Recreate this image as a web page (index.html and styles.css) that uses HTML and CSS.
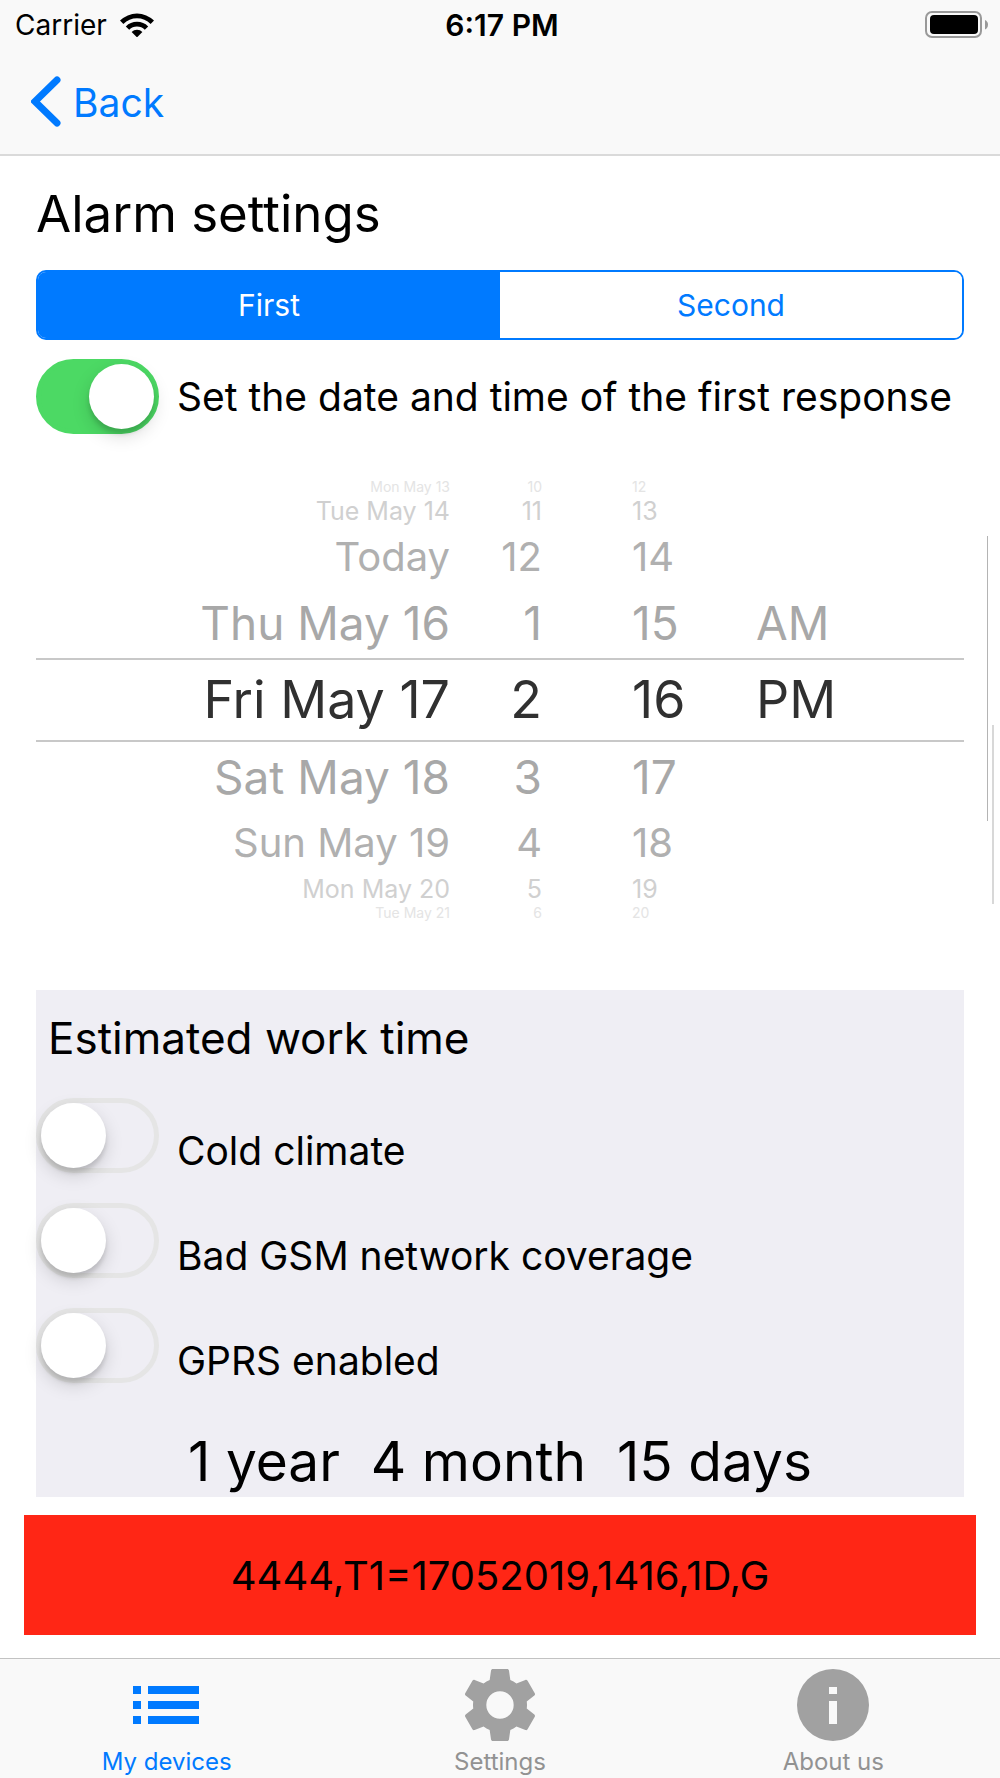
FILE: index.html
```html
<!DOCTYPE html>
<html lang="en">
<head>
<meta charset="utf-8">
<meta name="viewport" content="width=device-width, initial-scale=1">
<title>Alarm settings</title>
<link rel="stylesheet" href="styles.css">
</head>
<body>
<div class="app">
  <header class="top">
    <div class="status">
      <div class="carrier">
        <span>Carrier</span>
        <svg class="wifi" viewBox="0 0 34 24" aria-hidden="true">
          <path d="M0 7.6 A24 24 0 0 1 34 7.6 L30.6 11 A19.2 19.2 0 0 0 3.4 11 Z"/>
          <path d="M5.8 13.4 A15.8 15.8 0 0 1 28.2 13.4 L24.8 16.8 A11 11 0 0 0 9.2 16.8 Z"/>
          <path d="M11.6 19 A7.6 7.6 0 0 1 22.4 19 L17 24.4 Z"/>
        </svg>
      </div>
      <time class="clock">6:17 PM</time>
      <svg class="battery" viewBox="0 0 64 28" aria-hidden="true">
        <rect x="1" y="1" width="55" height="25" rx="6" fill="none" stroke="#999" stroke-width="2"/>
        <rect x="5" y="4" width="48" height="19" rx="4" fill="#000"/>
        <path d="M60 9 Q63 10.500 63 13.500 Q63 17 60 18.500 Z" fill="#999"/>
      </svg>
    </div>
    <nav class="navbar">
      <a class="back" href="#">
        <svg class="chevron" viewBox="0 0 30 52" aria-hidden="true"><path d="M26 4 L4 25.500 L26 47"/></svg>
        <span>Back</span>
      </a>
    </nav>
  </header>

  <main class="content">
    <h1 class="title">Alarm settings</h1>
    <div class="segments">
      <button class="segment segment-on" type="button" aria-pressed="true">First</button>
      <button class="segment" type="button" aria-pressed="false">Second</button>
    </div>
    <div class="switch-row">
      <input class="switch" type="checkbox" role="switch" id="set-date" checked>
      <label for="set-date">Set the date and time of the first response</label>
    </div>

    <div class="picker">
      <ul class="wheel" role="listbox" aria-label="Date">
        <li class="row far" role="option">Mon May 13</li>
        <li class="row third" role="option">Tue May 14</li>
        <li class="row second" role="option">Today</li>
        <li class="row first" role="option">Thu May 16</li>
        <li class="row current" role="option" aria-selected="true">Fri May 17</li>
        <li class="row first" role="option">Sat May 18</li>
        <li class="row second" role="option">Sun May 19</li>
        <li class="row third" role="option">Mon May 20</li>
        <li class="row far" role="option">Tue May 21</li>
      </ul>
      <ul class="wheel" role="listbox" aria-label="Hour">
        <li class="row far" role="option">10</li>
        <li class="row third" role="option">11</li>
        <li class="row second" role="option">12</li>
        <li class="row first" role="option">1</li>
        <li class="row current" role="option" aria-selected="true">2</li>
        <li class="row first" role="option">3</li>
        <li class="row second" role="option">4</li>
        <li class="row third" role="option">5</li>
        <li class="row far" role="option">6</li>
      </ul>
      <ul class="wheel wheel-minute" role="listbox" aria-label="Minute">
        <li class="row far" role="option">12</li>
        <li class="row third" role="option">13</li>
        <li class="row second" role="option">14</li>
        <li class="row first" role="option">15</li>
        <li class="row current" role="option" aria-selected="true">16</li>
        <li class="row first" role="option">17</li>
        <li class="row second" role="option">18</li>
        <li class="row third" role="option">19</li>
        <li class="row far" role="option">20</li>
      </ul>
      <ul class="wheel wheel-period" role="listbox" aria-label="AM or PM">
        <li class="row first" role="option">AM</li>
        <li class="row current" role="option" aria-selected="true">PM</li>
      </ul>
      <span class="scrollbar scrollbar-inner"></span>
      <span class="scrollbar scrollbar-outer"></span>
    </div>

    <section class="panel">
      <h2 class="panel-title">Estimated work time</h2>
      <div class="options">
        <div class="switch-row">
          <input class="switch" type="checkbox" role="switch" id="cold">
          <label for="cold">Cold climate</label>
        </div>
        <div class="switch-row">
          <input class="switch" type="checkbox" role="switch" id="gsm">
          <label for="gsm">Bad GSM network coverage</label>
        </div>
        <div class="switch-row">
          <input class="switch" type="checkbox" role="switch" id="gprs">
          <label for="gprs">GPRS enabled</label>
        </div>
      </div>
      <p class="estimate">1 year  4 month  15 days</p>
    </section>

    <button class="command" type="button">4444,T1=17052019,1416,1D,G</button>
  </main>

  <nav class="tabs">
    <a class="tab tab-on" href="#">
      <svg class="tab-icon" viewBox="0 0 72 72" aria-hidden="true">
        <path d="M2 17h8v8H2zM17 17h51v8H17zM2 32h8v8H2zM17 32h51v8H17zM2 47h8v8H2zM17 47h51v8H17z"/>
      </svg>
      <span>My devices</span>
    </a>
    <a class="tab" href="#">
      <svg class="tab-icon" viewBox="2 2 20 20" aria-hidden="true">
        <path d="M19.430 12.980c.04-.32.07-.64.07-.98s-.03-.66-.07-.98l2.110-1.650c.19-.15.24-.42.12-.64l-2-3.460c-.12-.22-.39-.3-.61-.22l-2.490 1c-.52-.4-1.080-.73-1.690-.98l-.38-2.650C14.460 2.180 14.250 2 14 2h-4c-.25 0-.46.18-.49.42l-.38 2.650c-.61.25-1.170.59-1.690.98l-2.490-1c-.23-.09-.49 0-.61.22l-2 3.460c-.13.22-.07.49.12.64l2.110 1.650c-.04.32-.07.65-.07.98s.03.66.07.98l-2.110 1.650c-.19.15-.24.42-.12.64l2 3.460c.12.22.39.3.61.22l2.490-1c.52.4 1.080.73 1.690.98l.38 2.650c.03.24.24.42.49.42h4c.25 0 .46-.18.49-.42l.38-2.650c.61-.25 1.170-.59 1.690-.98l2.490 1c.23.09.49 0 .61-.22l2-3.460c.12-.22.07-.49-.12-.64l-2.110-1.650zM12 15.800a3.800 3.800 0 1 1 0-7.600 3.800 3.800 0 0 1 0 7.600z"/>
      </svg>
      <span>Settings</span>
    </a>
    <a class="tab" href="#">
      <svg class="tab-icon" viewBox="0 0 72 72" aria-hidden="true">
        <path fill-rule="evenodd" d="M36 0a36 36 0 1 1 0 72a36 36 0 1 1 0-72zM32 18v7h8v-7zM32 32v23h8v-23z"/>
      </svg>
      <span>About us</span>
    </a>
  </nav>
</div>
</body>
</html>
```
FILE: styles.css
```css
* {
  box-sizing: border-box;
}

body {
  margin: 0;
  background: #fff;
  color: #000;
  font-family: Inter, "Liberation Sans", sans-serif;
  font-size: 39px;
}

h1, h2, p, ul {
  margin: 0;
  padding: 0;
  font-weight: 400;
  list-style: none;
}

a {
  color: inherit;
  text-decoration: none;
}

button {
  margin: 0;
  padding: 0;
  border: 0;
  font: inherit;
}

.app {
  display: flex;
  flex-direction: column;
  min-height: 100vh;
}

/* Status and navigation bars */
.top {
  background: #f9f9f9;
  border-bottom: 2px solid #dadada;
}

.status {
  display: grid;
  grid-template-columns: 1fr auto 1fr;
  align-items: center;
  height: 50px;
  padding: 0 11px 0 15px;
  font-size: 28px;
}

.carrier {
  display: flex;
  align-items: center;
  gap: 13px;
}

.wifi {
  width: 34px;
  height: 24px;
}

.clock {
  font-size: 30px;
  font-weight: 600;
}

.battery {
  justify-self: end;
  width: 64px;
  height: 28px;
}

.navbar {
  height: 104px;
  padding: 0 31px;
}

.back {
  display: inline-flex;
  align-items: center;
  gap: 12px;
  height: 104px;
  color: #007aff;
}

.chevron {
  width: 30px;
  height: 52px;
  fill: none;
  stroke: #007aff;
  stroke-width: 7px;
  stroke-linecap: round;
}

/* Alarm form */
.content {
  flex: 1;
  padding: 26px 36px 22px;
}

.title {
  font-size: 51px;
  line-height: 64px;
}

.segments {
  display: flex;
  height: 70px;
  margin-top: 24px;
  border: 2px solid #007aff;
  border-radius: 10px;
  overflow: hidden;
}

.segment {
  flex: 1;
  background: #fff;
  color: #007aff;
  font-size: 30px;
}

.segment-on {
  background: #007aff;
  color: #fff;
}

.switch-row {
  display: flex;
  align-items: center;
  gap: 18px;
  line-height: 44px;
  white-space: nowrap;
}

.segments + .switch-row {
  margin-top: 19px;
}

.switch {
  appearance: none;
  display: flex;
  flex: none;
  width: 123px;
  height: 75px;
  margin: 0;
  border: 5px solid #e5e5e5;
  border-radius: 38px;
}

.switch::before {
  content: "";
  width: 65px;
  height: 65px;
  border-radius: 50%;
  background: #fff;
  box-shadow: 0 7px 18px rgba(0, 0, 0, 0.15), 0 5px 4px rgba(0, 0, 0, 0.12);
}

.switch:checked {
  justify-content: flex-end;
  border-color: #4cd964;
  background: #4cd964;
}

/* Date and time wheels */
.picker {
  position: relative;
  display: grid;
  grid-template-columns: 414fr 92fr 150fr 272fr;
  align-items: center;
  margin-top: 44px;
  text-align: right;
  white-space: nowrap;
}

.wheel-minute,
.wheel-period {
  text-align: left;
}

.wheel-minute .row {
  padding-left: 90px;
}

.wheel-period .row {
  padding-left: 64px;
}

.wheel-period::after {
  content: "";
  display: block;
  height: 70px;
}

.row.current {
  height: 84px;
  border: solid #c8c8c8;
  border-width: 2px 0;
  color: #303030;
  font-size: 52px;
  line-height: 80px;
}

.row.first {
  height: 70px;
  color: #a8a8a8;
  font-size: 46px;
  line-height: 70px;
}

.row.second {
  height: 62px;
  color: #b0b0b0;
  font-size: 40px;
  line-height: 62px;
}

.row.third {
  height: 30px;
  color: #d0d0d0;
  font-size: 25px;
  line-height: 30px;
}

.row.far {
  height: 18px;
  color: #e4e4e4;
  font-size: 14px;
  line-height: 18px;
}

.scrollbar {
  position: absolute;
}

.scrollbar-inner {
  top: 58px;
  right: -24px;
  width: 1px;
  height: 285px;
  background: #b4b4b4;
}

.scrollbar-outer {
  top: 247px;
  right: -30px;
  width: 2px;
  height: 179px;
  background: #d8d8d8;
}

/* Estimated work time */
.panel {
  margin-top: 68px;
  background: #efeef4;
}

.panel-title {
  padding: 20px 12px 0;
  font-size: 44px;
  line-height: 56px;
}

.options {
  display: grid;
  gap: 30px;
  margin-top: 32px;
}

.options label {
  padding-top: 30px;
}

.estimate {
  height: 114px;
  padding-top: 43px;
  font-size: 55px;
  line-height: 70px;
  text-align: center;
  white-space: pre;
}

.command {
  display: block;
  width: calc(100% + 24px);
  height: 120px;
  margin: 18px -12px 0;
  background: #ff2615;
  color: #000;
  font-size: 40px;
}

/* Tab bar */
.tabs {
  display: grid;
  grid-template-columns: repeat(3, 1fr);
  height: 120px;
  border-top: 1px solid #c2c2c2;
  background: #f9f9f9;
}

.tab {
  display: flex;
  flex-direction: column;
  align-items: center;
  gap: 6px;
  padding-top: 10px;
  color: #929292;
  fill: #a1a1a1;
  font-size: 24px;
  line-height: 30px;
}

.tab-on {
  color: #007aff;
  fill: #007aff;
}

.tab-icon {
  width: 72px;
  height: 72px;
}
```
